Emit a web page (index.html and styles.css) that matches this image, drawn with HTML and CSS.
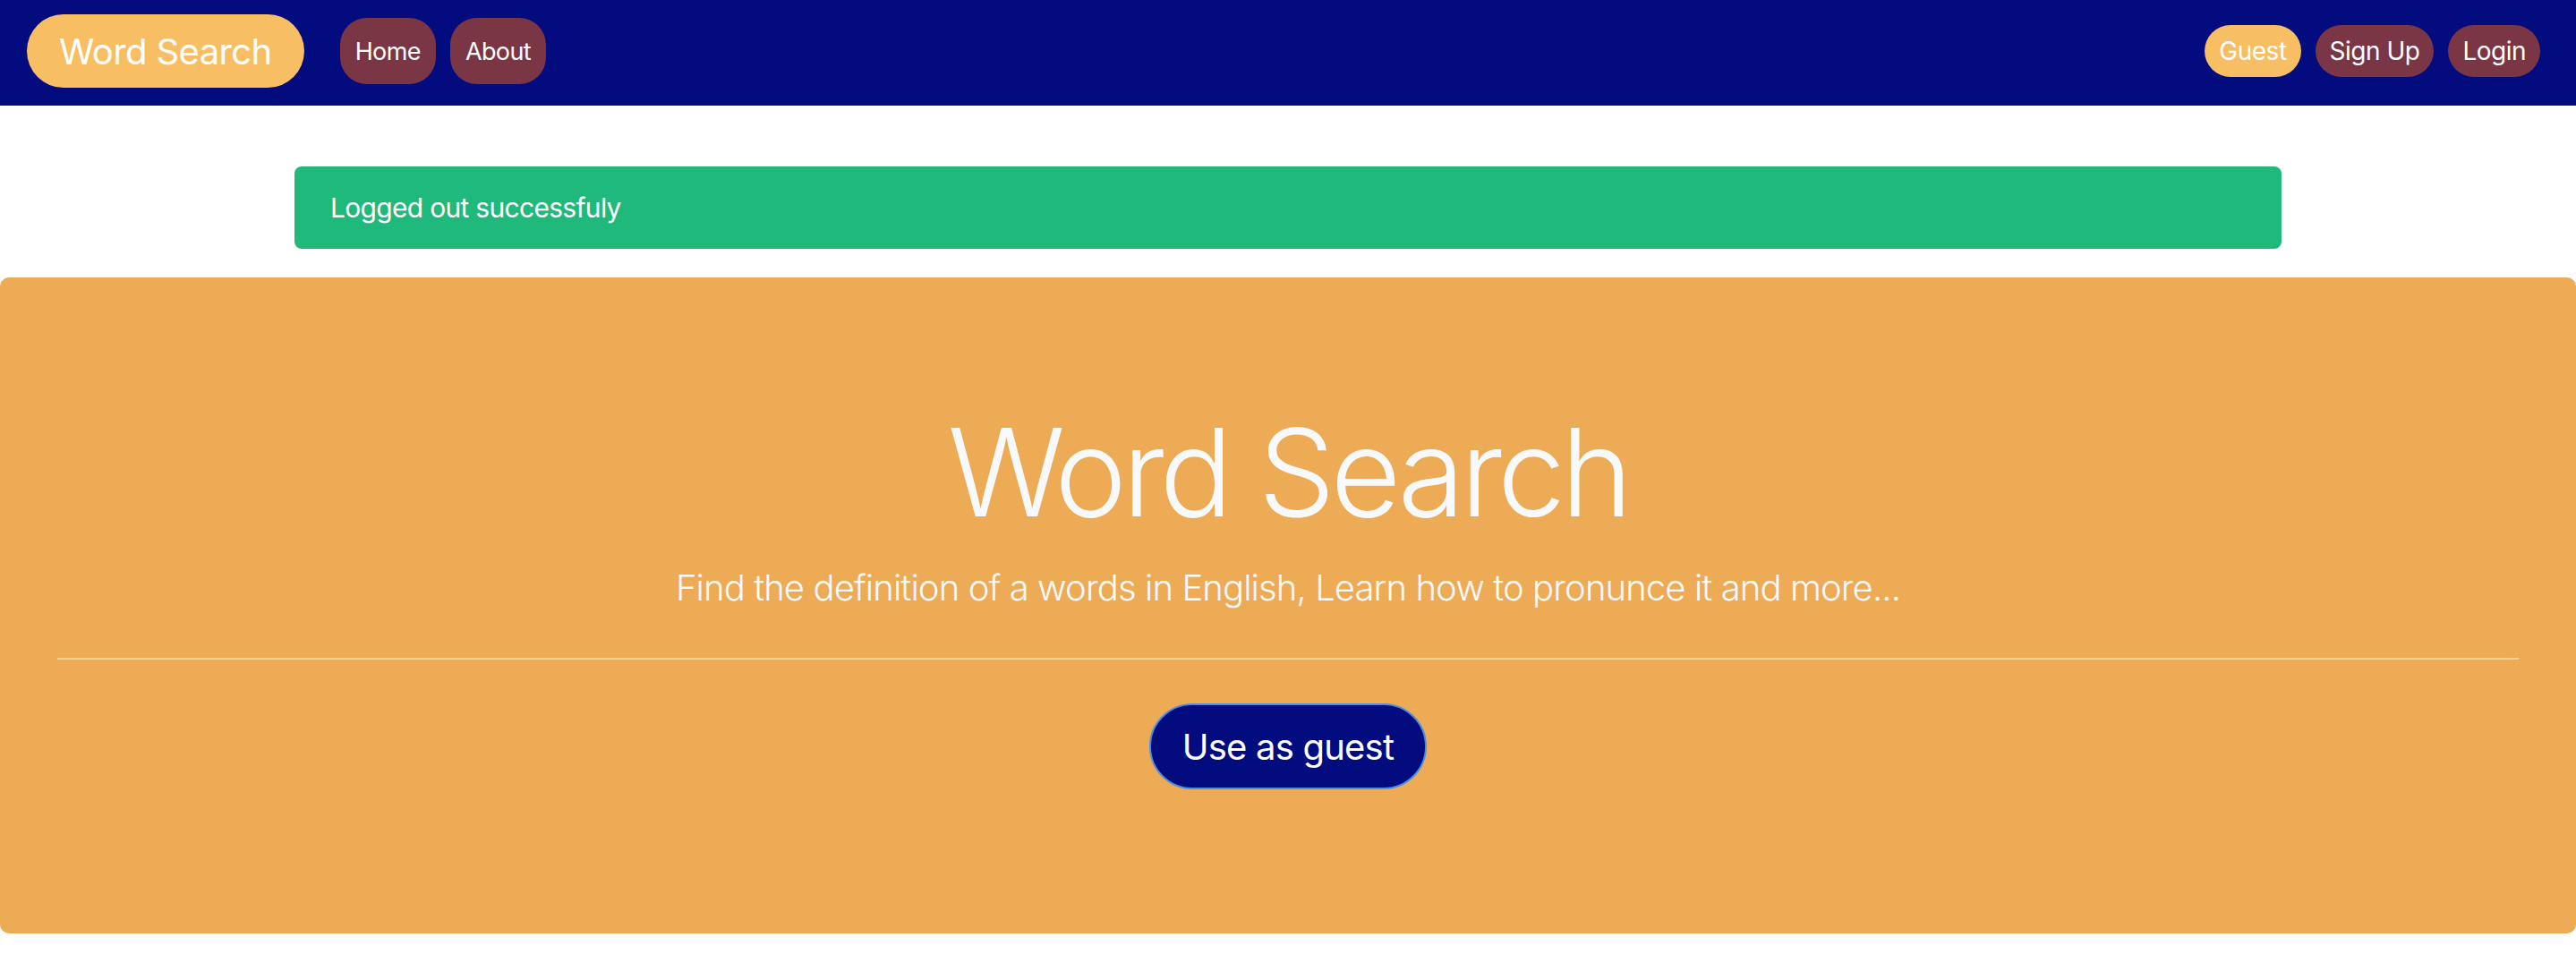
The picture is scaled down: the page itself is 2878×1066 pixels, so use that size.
FILE: index.html
```html
<!DOCTYPE html>
<html lang="en">
<head>
<meta charset="utf-8">
<title>Word Search</title>
<link rel="stylesheet" href="styles.css">
</head>
<body>
<nav class="navbar">
  <a class="brand" href="#">Word Search</a>
  <ul class="nav-left">
    <li><a class="pill pill-tall" href="#">Home</a></li>
    <li><a class="pill pill-tall" href="#">About</a></li>
  </ul>
  <ul class="nav-right">
    <li><a class="pill pill-yellow" href="#">Guest</a></li>
    <li><a class="pill" href="#">Sign Up</a></li>
    <li><a class="pill" href="#">Login</a></li>
  </ul>
</nav>
<div class="container">
  <div class="alert">Logged out successfuly</div>
</div>
<div class="jumbotron">
  <h1 class="display">Word Search</h1>
  <p class="lead">Find the definition of a words in English, Learn how to pronunce it and more...</p>
  <hr class="divider">
  <p class="action"><a class="btn-guest" href="#">Use as guest</a></p>
</div>
</body>
</html>
```
FILE: styles.css
```css
* { box-sizing: border-box; }
html, body { margin: 0; padding: 0; }
body {
  font-family: Inter, "Liberation Sans", sans-serif;
  background: #ffffff;
  color: #212529;
}
a { text-decoration: none; }
ul { list-style: none; margin: 0; padding: 0; }

.navbar {
  display: flex;
  align-items: center;
  height: 118px;
  padding: 0 40px 4px 30px;
  background: #030c7e;
}
.brand {
  display: inline-flex;
  align-items: center;
  height: 82px;
  padding: 0 36px;
  border-radius: 41px;
  background: #f7be63;
  color: #ffffff;
  font-size: 40px;
  letter-spacing: -0.6px;
}
.nav-left {
  display: flex;
  gap: 16px;
  margin-left: 40px;
}
.nav-right {
  display: flex;
  gap: 16px;
  margin-left: auto;
}
.pill {
  display: inline-flex;
  align-items: center;
  height: 58px;
  padding: 0 16px;
  border-radius: 29px;
  background: #7a3645;
  color: #ffffff;
  font-size: 28px;
  letter-spacing: -0.5px;
}
.pill-tall {
  height: 74px;
  padding: 0 17px;
  border-radius: 30px;
  font-size: 27px;
  letter-spacing: -0.6px;
}
.pill-yellow { background: #f7be63; }

.container {
  width: 2280px;
  margin: 0 auto;
  padding: 68px 30px 0;
}
.alert {
  height: 92px;
  display: flex;
  align-items: center;
  padding: 0 40px;
  margin-bottom: 32px;
  border-radius: 8px;
  background: #1fb97b;
  color: #ffffff;
  font-size: 30px;
  letter-spacing: -0.7px;
}

.jumbotron {
  height: 733px;
  padding: 136px 64px 0;
  border-radius: 10px;
  background: #eeab56;
  text-align: center;
  color: #f8f9fa;
}
.display {
  margin: 0;
  font-size: 136px;
  font-weight: 300;
  line-height: 164px;
  letter-spacing: -5px;
}
.lead {
  margin: 17px 0 0;
  font-size: 40px;
  font-weight: 300;
  line-height: 60px;
  letter-spacing: -0.9px;
}
.divider {
  margin: 48px 0 0;
  border: 0;
  height: 2px;
  background: #f7d39c;
}
.action {
  margin: 49px 0 0;
}
.btn-guest {
  display: inline-flex;
  align-items: center;
  justify-content: center;
  height: 96px;
  padding: 0 35px;
  border: 2px solid #4a8ee3;
  border-radius: 48px;
  background: #030c7e;
  color: #ffffff;
  font-size: 40px;
  letter-spacing: -0.8px;
}
```
